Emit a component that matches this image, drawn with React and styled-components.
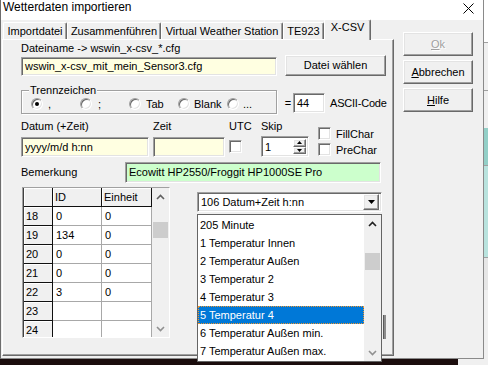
import React from 'react';
import styled, { createGlobalStyle, css } from 'styled-components';

const GlobalStyle = createGlobalStyle`
  html, body {
    margin: 0;
    padding: 0;
    background: #1b0d0d;
  }
  body {
    font-family: 'Liberation Sans', Arial, sans-serif;
    font-size: 11px;
    color: #000;
  }
  * { box-sizing: border-box; }
`;

const raised = css`
  border: 1px solid;
  border-color: #fff #696969 #696969 #fff;
  box-shadow: inset -1px -1px #a0a0a0, inset 1px 1px #e3e3e3;
  background: #f0f0f0;
`;

const sunken = css`
  border: 1px solid;
  border-color: #a0a0a0 #fff #fff #a0a0a0;
  box-shadow: inset 1px 1px #696969, inset -1px -1px #e3e3e3;
`;

const Desktop = styled.div`
  width: 488px;
  height: 365px;
  overflow: hidden;
  display: flex;
  flex-direction: column;
  background: linear-gradient(to right, #1b0d0d 0 458px, #f0f0f0 458px);
`;

const Top = styled.div`
  display: flex;
  height: 359px;
`;

const Dialog = styled.div`
  width: 484px;
  height: 359px;
  flex: none;
  border-left: 1px solid #6d6d6d;
  border-right: 1px solid #8a8a8a;
  border-bottom: 1px solid #8a8a8a;
  background: #f0f0f0;
  display: flex;
  flex-direction: column;
`;

const BackWindow = styled.div`
  flex: 1;
  background: linear-gradient(
    to bottom,
    #fff 0 42px, #a0a0a0 42px 43px, #f0f0f0 43px 90px, #a0a0a0 90px 91px,
    #f0f0f0 91px 128px, #93cfc7 128px 165px, #a0a0a0 165px 166px,
    #b9e3de 166px 257px, #a0a0a0 257px 258px, #e6e6e6 258px 290px, #f0f0f0 290px
  );
`;

const TitleBar = styled.div`
  height: 20px;
  background: #fff;
  display: flex;
  justify-content: space-between;
  align-items: flex-start;
  padding: 0 9px 0 2px;
`;

const Title = styled.div`
  font-size: 12px;
  line-height: 15px;
`;

const CloseIcon = styled.svg`
  margin-top: 3px;
`;

const Body = styled.div`
  flex: 1;
  display: flex;
  padding-left: 1px;
`;

const TabArea = styled.div`
  width: 392px;
  height: 336px;
  display: flex;
  flex-direction: column;
`;

const TabStrip = styled.div`
  height: 19px;
  display: flex;
  align-items: flex-end;
  padding-left: 1px;
`;

const Tab = styled.div`
  flex: none;
  width: ${p => p.$w}px;
  height: ${p => (p.$active ? 21 : 17)}px;
  margin-bottom: ${p => (p.$active ? -1 : 0)}px;
  position: relative;
  z-index: ${p => (p.$active ? 1 : 0)};
  background: #f0f0f0;
  border-top: 1px solid #fff;
  border-left: 1px solid #fff;
  border-right: 1px solid #696969;
  border-radius: 2px 2px 0 0;
  box-shadow: inset -1px 0 #a0a0a0;
  text-align: center;
  line-height: ${p => (p.$active ? 15 : 16)}px;
  white-space: nowrap;
`;

const Panel = styled.div`
  flex: 1;
  border-top: 1px solid #fff;
  border-left: 1px solid #fff;
  border-right: 1px solid #696969;
  border-bottom: 1px solid #696969;
  box-shadow: inset -1px -1px #a0a0a0;
  padding: 2px 0 0 18px;
  display: flex;
  flex-direction: column;
`;

const Label = styled.div`
  line-height: 13px;
  white-space: nowrap;
`;

const Row = styled.div`
  display: flex;
  align-items: flex-start;
  margin-top: ${p => p.$mt || 0}px;
  height: ${p => p.$h}px;
`;

const Edit = styled.div`
  ${sunken};
  width: ${p => p.$w}px;
  height: ${p => p.$h || 20}px;
  margin-top: ${p => p.$mt || 0}px;
  margin-left: ${p => p.$ml || 0}px;
  background: ${p => p.$bg || '#fff'};
  padding: 0 3px;
  line-height: ${p => (p.$h || 20) - 2}px;
  white-space: nowrap;
  overflow: hidden;
  flex: none;
`;

const Button = styled.div`
  ${raised};
  width: ${p => p.$w}px;
  height: ${p => p.$h}px;
  margin-left: ${p => p.$ml || 0}px;
  line-height: ${p => p.$h - 2}px;
  text-align: center;
  flex: none;
  color: ${p => (p.$disabled ? '#a0a0a0' : '#000')};
  text-shadow: ${p => (p.$disabled ? '1px 1px #fff' : 'none')};
`;

const GroupBox = styled.div`
  position: relative;
  width: 256px;
  height: 24px;
  border: 1px solid #a0a0a0;
  box-shadow: inset 1px 1px #fff, 1px 1px #fff;
  display: flex;
  padding: 7px 0 0 9px;
`;

const GroupLabel = styled.span`
  position: absolute;
  top: -7px;
  left: 7px;
  padding: 0 1px;
  background: #f0f0f0;
  line-height: 12px;
`;

const Option = styled.div`
  width: 49px;
  display: flex;
  align-items: center;
  gap: ${p => p.$gap}px;
  height: 12px;
  flex: none;
`;

const Radio = styled.span`
  flex: none;
  width: 12px;
  height: 12px;
  border-radius: 50%;
  border: 1px solid;
  border-color: #a0a0a0 #fff #fff #a0a0a0;
  box-shadow: inset 1px 1px #696969, inset -1px -1px #e3e3e3;
  background: #fff;
  display: flex;
  align-items: center;
  justify-content: center;

  &::after {
    content: '';
    width: 4px;
    height: 4px;
    border-radius: 50%;
    background: ${p => (p.$on ? '#000' : 'transparent')};
  }
`;

const Eq = styled.span`
  width: 10px;
  margin: 3px 0 0 6px;
  line-height: 20px;
  text-align: center;
`;

const Side = styled.span`
  margin: 3px 0 0 5px;
  line-height: 20px;
  letter-spacing: -0.2px;
`;

const FieldGrid = styled.div`
  display: grid;
  grid-template-columns: 128px 72px 28px 48px auto;
  grid-template-rows: 13px 20px;
  column-gap: 4px;
  row-gap: 4px;
  margin-top: 6px;
`;

const Check = styled.span`
  ${sunken};
  display: block;
  flex: none;
  width: 13px;
  height: 13px;
  background: #fff;
  margin-top: ${p => p.$mt || 0}px;
`;

const CheckColumn = styled.div`
  grid-column: 5;
  grid-row: 1 / span 2;
  margin-left: 5px;
  padding-top: 7px;
  display: flex;
  flex-direction: column;
  gap: 3px;
`;

const CheckRow = styled.div`
  display: flex;
  align-items: center;
  gap: 5px;
  height: 13px;
  white-space: nowrap;
`;

const Spinner = styled.div`
  ${sunken};
  width: 48px;
  height: 21px;
  margin-top: -1px;
  background: #fff;
  display: flex;
  align-items: stretch;
  padding: 2px 2px 2px 3px;
`;

const SpinText = styled.span`
  flex: 1;
  line-height: 17px;
`;

const SpinButtons = styled.div`
  width: 13px;
  display: flex;
  flex-direction: column;
`;

const SpinButton = styled.div`
  ${raised};
  flex: 1;
  display: flex;
  align-items: center;
  justify-content: center;
`;

const BottomRow = styled.div`
  display: flex;
  align-items: flex-start;
  margin-top: 4px;
`;

const DataGrid = styled.div`
  width: 148px;
  height: 151px;
  margin-left: 1px;
  border: 1px solid;
  border-color: #a0a0a0 #fff #fff #a0a0a0;
  display: flex;
  overflow: hidden;
  background: #f0f0f0;
`;

const Table = styled.div`
  display: grid;
  grid-template-columns: 29px 49px 50px;
  grid-auto-rows: 19px;
  border-left: 1px solid #404040;
  align-content: start;
  overflow: hidden;
  background: #fff;
`;

const Cell = styled.div`
  padding-left: ${p => (p.$fixed ? 2 : 3)}px;
  line-height: 18px;
  white-space: nowrap;
  overflow: hidden;
  background: ${p => (p.$fixed ? '#f0f0f0' : '#fff')};
  border-right: 1px solid ${p => (p.$fixed ? '#101010' : '#a8a8a8')};
  border-bottom: 1px solid ${p => (p.$fixed ? '#101010' : '#a8a8a8')};
  box-shadow: ${p => (p.$fixed ? 'inset 1px 1px #fff' : 'none')};
`;

const ScrollBar = styled.div`
  width: 17px;
  flex: none;
  background: #f0f0f0;
  display: flex;
  flex-direction: column;
  align-items: center;
`;

const ArrowBox = styled.div`
  height: 17px;
  width: 17px;
  flex: none;
  display: flex;
  align-items: center;
  justify-content: center;
`;

const Thumb = styled.div`
  width: 15px;
  height: ${p => p.$h}px;
  margin-top: ${p => p.$top}px;
  background: #cdcdcd;
  flex: none;
`;

const Spacer = styled.div`
  flex: 1;
`;

const ComboWrap = styled.div`
  position: relative;
  width: 185px;
  margin: 5px 0 0 27px;
`;

const Combo = styled.div`
  ${sunken};
  height: 20px;
  background: #fff;
  display: flex;
  align-items: center;
  padding: 2px 2px 2px 3px;
`;

const ComboText = styled.span`
  flex: 1;
  line-height: 16px;
`;

const ComboButton = styled.div`
  ${raised};
  width: 16px;
  height: 16px;
  display: flex;
  align-items: center;
  justify-content: center;
`;

const DropList = styled.div`
  position: absolute;
  top: 22px;
  left: 0;
  width: 185px;
  height: 148px;
  border: 1px solid #646464;
  background: #fff;
  display: flex;
  z-index: 5;
`;

const Items = styled.div`
  flex: 1;
  padding-top: 1px;
`;

const Item = styled.div`
  height: 18px;
  line-height: 18px;
  padding-left: 2px;
  white-space: nowrap;
  background: ${p => (p.$sel ? '#0078d7' : 'transparent')};
  color: ${p => (p.$sel ? '#fff' : '#000')};
  outline: ${p => (p.$sel ? '1px dotted #f0962e' : 'none')};
  outline-offset: -1px;
`;

const PeekBar = styled.div`
  position: absolute;
  left: 186px;
  top: 123px;
  width: 3px;
  height: 24px;
  background: #8c8c8c;
  border-left: 1px solid #5a5a5a;
`;

const ButtonColumn = styled.div`
  margin-left: 9px;
  padding-top: 12px;
  display: flex;
  flex-direction: column;
  gap: 4px;
`;

const U = styled.span`
  text-decoration: underline;
`;

const Taskbar = styled.div`
  height: 6px;
`;

const Chevron = ({ up, color = '#606060' }) => (
  <svg width="9" height="6" viewBox="0 0 9 6">
    <path
      d={up ? 'M1 5 L4.5 1.5 L8 5' : 'M1 1 L4.5 4.5 L8 1'}
      fill="none"
      stroke={color}
      strokeWidth="1.6"
    />
  </svg>
);

const Tri = ({ up, w = 7, h = 4 }) => (
  <svg width={w} height={h} viewBox={`0 0 ${w} ${h}`}>
    <path d={up ? `M0 ${h} L${w / 2} 0 L${w} ${h}Z` : `M0 0 L${w / 2} ${h} L${w} 0Z`} fill="#000" />
  </svg>
);

const tabs = [
  { label: 'Importdatei', w: 64 },
  { label: 'Zusammenführen', w: 94 },
  { label: 'Virtual Weather Station', w: 122 },
  { label: 'TE923', w: 41 },
  { label: 'X-CSV', w: 47, active: true },
];

const separators = [
  { label: ',', on: true, gap: 5 },
  { label: ';', gap: 6 },
  { label: 'Tab', gap: 5 },
  { label: 'Blank', gap: 4 },
  { label: '...', gap: 4 },
];

const rows = [
  ['18', '0', '0'],
  ['19', '134', '0'],
  ['20', '0', '0'],
  ['21', '0', '0'],
  ['22', '3', '0'],
  ['23', '', ''],
  ['24', '', ''],
];

const listItems = [
  '205 Minute',
  '1 Temperatur Innen',
  '2 Temperatur Außen',
  '3 Temperatur 2',
  '4 Temperatur 3',
  '5 Temperatur 4',
  '6 Temperatur Außen min.',
  '7 Temperatur Außen max.',
];

export default function App() {
  return (
    <>
      <GlobalStyle />
      <Desktop>
        <Top>
          <Dialog>
            <TitleBar>
              <Title>Wetterdaten importieren</Title>
              <CloseIcon width="11" height="11" viewBox="0 0 11 11">
                <path d="M0.5 0.5 L10.5 10.5 M10.5 0.5 L0.5 10.5" stroke="#000" strokeWidth="1" />
              </CloseIcon>
            </TitleBar>
            <Body>
              <TabArea>
                <TabStrip>
                  {tabs.map(t => (
                    <Tab key={t.label} $w={t.w} $active={t.active}>{t.label}</Tab>
                  ))}
                </TabStrip>
                <Panel>
                  <Label>Dateiname -&gt; wswin_x-csv_*.cfg</Label>
                  <Row $h={21}>
                    <Edit $w={256} $h={19} $mt={2} $bg="#ffffe1">wswin_x-csv_mit_mein_Sensor3.cfg</Edit>
                    <Button $w={101} $h={21} $ml={8}>Datei wählen</Button>
                  </Row>
                  <Row $h={24} $mt={14}>
                    <GroupBox>
                      <GroupLabel>Trennzeichen</GroupLabel>
                      {separators.map(s => (
                        <Option key={s.label} $gap={s.gap}>
                          <Radio $on={s.on} />
                          <span>{s.label}</span>
                        </Option>
                      ))}
                    </GroupBox>
                    <Eq>=</Eq>
                    <Edit $w={32} $mt={3}>44</Edit>
                    <Side>ASCII-Code</Side>
                  </Row>
                  <FieldGrid>
                    <Label>Datum (+Zeit)</Label>
                    <Label>Zeit</Label>
                    <Label>UTC</Label>
                    <Label>Skip</Label>
                    <CheckColumn>
                      <CheckRow><Check />FillChar</CheckRow>
                      <CheckRow><Check />PreChar</CheckRow>
                    </CheckColumn>
                    <Edit $w={128} $bg="#ffffe1">yyyy/m/d h:nn</Edit>
                    <Edit $w={72} $bg="#ffffe1" />
                    <Check $mt={3} />
                    <Spinner>
                      <SpinText>1</SpinText>
                      <SpinButtons>
                        <SpinButton><Tri up w={5} h={3} /></SpinButton>
                        <SpinButton><Tri w={5} h={3} /></SpinButton>
                      </SpinButtons>
                    </Spinner>
                  </FieldGrid>
                  <Row $h={21} $mt={5}>
                    <Label style={{ width: 104, lineHeight: '21px' }}>Bemerkung</Label>
                    <Edit $w={256} $h={21} $bg="#ccffcc">Ecowitt HP2550/Froggit HP1000SE Pro</Edit>
                  </Row>
                  <BottomRow>
                    <DataGrid>
                      <Table>
                        <Cell $fixed />
                        <Cell $fixed>ID</Cell>
                        <Cell $fixed>Einheit</Cell>
                        {rows.map(r => (
                          <React.Fragment key={r[0]}>
                            <Cell $fixed>{r[0]}</Cell>
                            <Cell>{r[1]}</Cell>
                            <Cell>{r[2]}</Cell>
                          </React.Fragment>
                        ))}
                      </Table>
                      <ScrollBar>
                        <ArrowBox><Chevron up /></ArrowBox>
                        <Thumb $top={17} $h={16} />
                        <Spacer />
                        <ArrowBox><Chevron color="#909090" /></ArrowBox>
                      </ScrollBar>
                    </DataGrid>
                    <ComboWrap>
                      <Combo>
                        <ComboText>106 Datum+Zeit h:nn</ComboText>
                        <ComboButton><Tri /></ComboButton>
                      </Combo>
                      <PeekBar />
                      <DropList>
                        <Items>
                          {listItems.map(it => (
                            <Item key={it} $sel={it === '5 Temperatur 4'}>{it}</Item>
                          ))}
                        </Items>
                        <ScrollBar>
                          <ArrowBox><Chevron up color="#202020" /></ArrowBox>
                          <Thumb $top={21} $h={17} />
                          <Spacer />
                          <ArrowBox><Chevron color="#909090" /></ArrowBox>
                        </ScrollBar>
                      </DropList>
                    </ComboWrap>
                  </BottomRow>
                </Panel>
              </TabArea>
              <ButtonColumn>
                <Button $w={70} $h={24} $disabled><U>O</U>k</Button>
                <Button $w={70} $h={24}><U>A</U>bbrechen</Button>
                <Button $w={70} $h={24}><U>H</U>ilfe</Button>
              </ButtonColumn>
            </Body>
          </Dialog>
          <BackWindow />
        </Top>
        <Taskbar />
      </Desktop>
    </>
  );
}
